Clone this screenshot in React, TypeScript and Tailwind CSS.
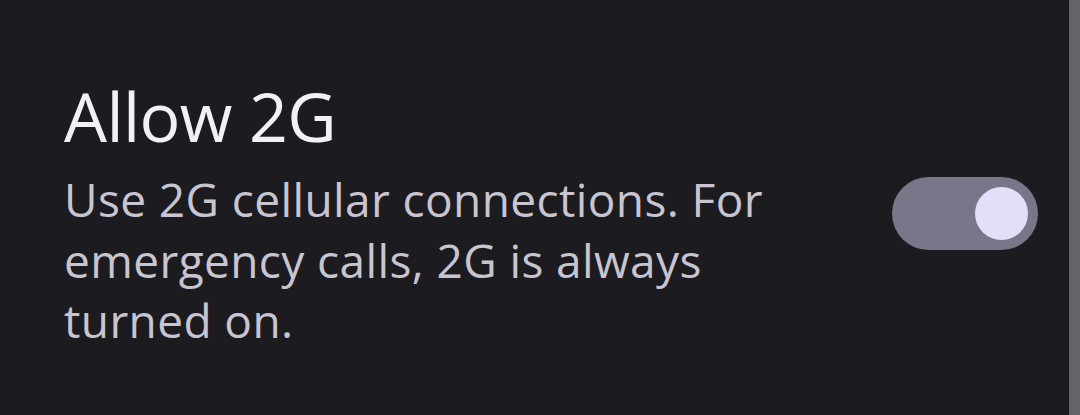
import React, { useState } from 'react';

const Toggle: React.FC<{ checked: boolean; onChange: (v: boolean) => void }> = ({ checked, onChange }) => (
  <button
    onClick={() => onChange(!checked)}
    className={`flex items-center w-[146px] h-[73px] rounded-full px-[10px] shrink-0 ${
      checked ? 'justify-end bg-[#79768a]' : 'justify-start bg-[#36343b]'
    }`}
  >
    <span className="block w-[53px] h-[53px] rounded-full bg-[#e2e0f9]" />
  </button>
);

const App: React.FC = () => {
  const [allow2g, setAllow2g] = useState(true);

  return (
    <div className="flex w-[1080px] h-[415px] bg-[#1c1b20] overflow-hidden">
      {/* Setting row */}
      <div className="flex flex-1 items-start pl-[64px] pr-[31px] pt-[76px]">
        <div className="flex flex-1 items-center justify-between">
          <div className="flex flex-col gap-[13px] font-['Open_Sans',sans-serif]">
            <h3 className="text-[68px] leading-[80px] tracking-[-0.6px] text-[#f2eff6]">Allow 2G</h3>
            <p className="text-[46px] leading-[60.5px] tracking-[0.4px] text-[#c8c5d0]">
              Use 2G cellular connections. For
              <br />
              emergency calls, 2G is always
              <br />
              turned on.
            </p>
          </div>
          <Toggle checked={allow2g} onChange={setAllow2g} />
        </div>
      </div>
      {/* Scrollbar */}
      <div className="w-[11px] h-full bg-[#646368]" />
    </div>
  );
};

export default App;
